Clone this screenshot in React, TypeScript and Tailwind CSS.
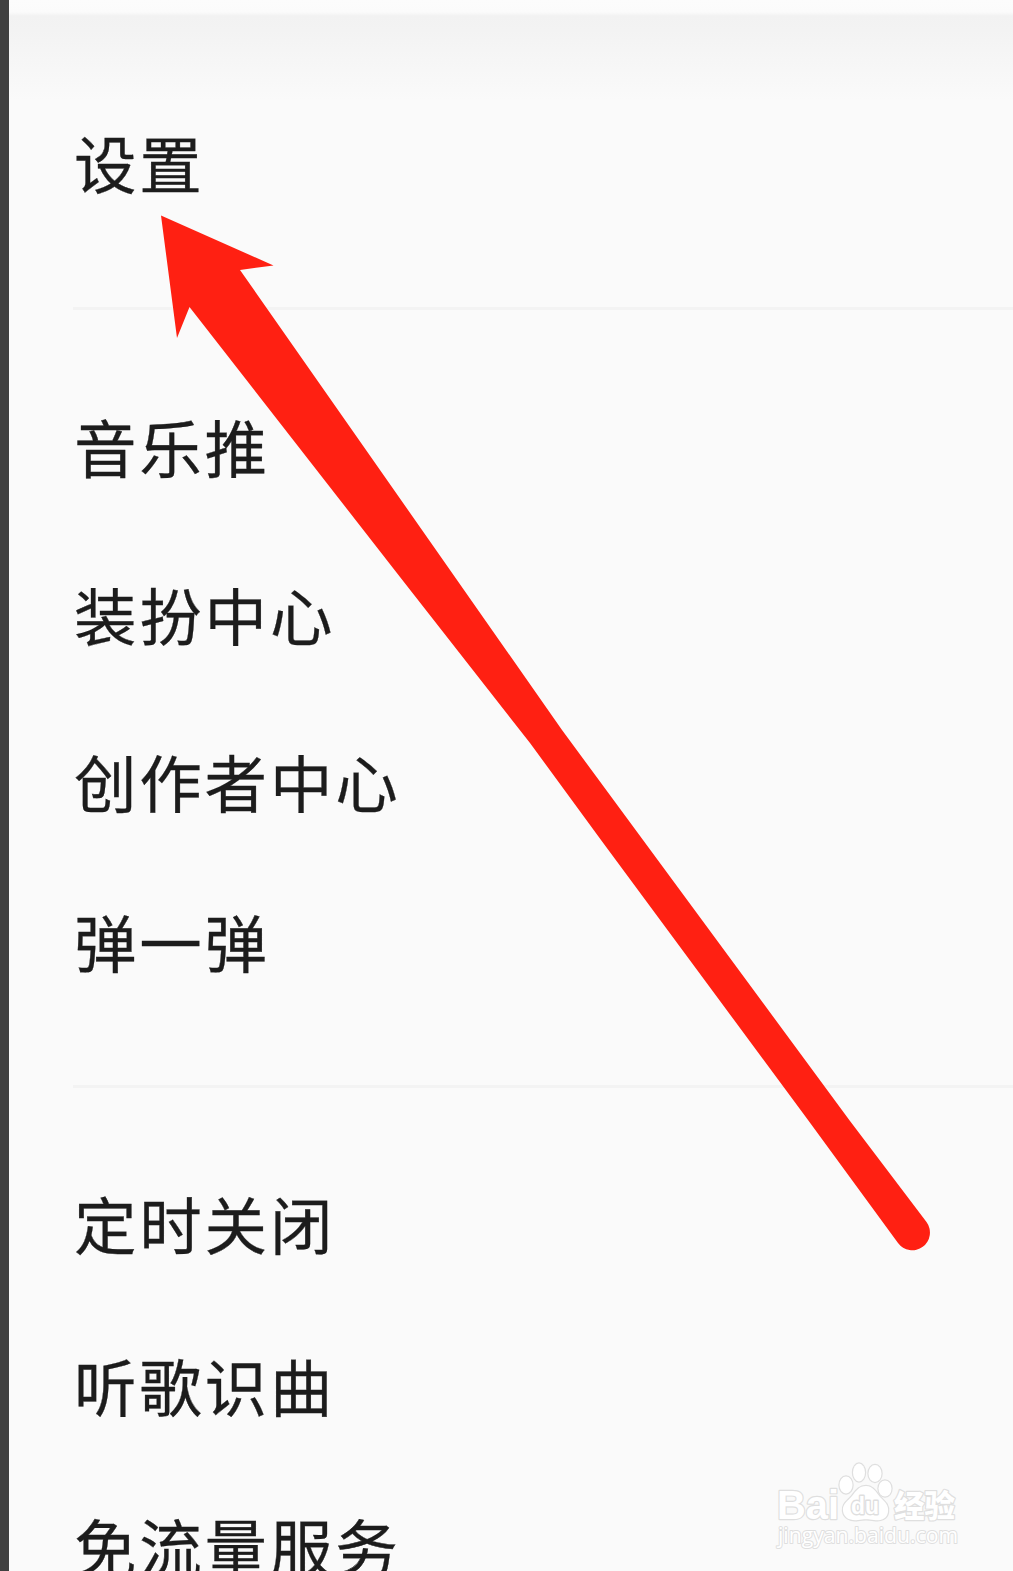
const groups = [
  {
    className: "pt-[68px] pb-[63px]",
    items: [{ label: "设置", height: "h-[163px]" }],
  },
  {
    className: "pt-[51px] pb-[66px]",
    items: [
      { label: "音乐推", height: "h-[170px]" },
      { label: "装扮中心", height: "h-[167px]" },
      { label: "创作者中心", height: "h-[166px]" },
      { label: "弹一弹", height: "h-[155px]" },
    ],
  },
  {
    className: "pt-[54px]",
    items: [
      { label: "定时关闭", height: "h-[162px]" },
      { label: "听歌识曲", height: "h-[162px]" },
      { label: "免流量服务", height: "h-[158px]" },
    ],
  },
];

function Arrow() {
  return (
    <svg className="absolute left-0 top-0 h-[1571px] w-[1013px]" viewBox="0 0 1013 1571" fill="#ff2012" aria-hidden="true">
      <path d="M161 215.500 L273.500 265.500 L240 270 L429 540 L562 730 L643 840 L850 1121 L926.500 1222 A17.500 17.500 0 0 1 898 1243 L808 1120 L601 840 L530 743 L400 577 L189.500 307 L177 338 Z" />
    </svg>
  );
}

function Watermark() {
  return (
    <svg className="absolute left-[770px] top-[1456px] h-[96px] w-[200px]" viewBox="0 0 200 96" aria-hidden="true">
      <g fill="#fff" stroke="#dfdfdf" strokeWidth="2.400" paintOrder="stroke" strokeLinejoin="round">
        <text x="7" y="62.500" fontSize="40" fontWeight="700" fontFamily="Liberation Sans, sans-serif" textLength="62" lengthAdjust="spacingAndGlyphs">Bai</text>
        <ellipse cx="76" cy="29" rx="6.500" ry="8.500" />
        <ellipse cx="89" cy="16.500" rx="6" ry="9" />
        <ellipse cx="105" cy="17.500" rx="6.500" ry="8.500" />
        <ellipse cx="115" cy="32.500" rx="6.500" ry="8" />
        <path d="M96 30 C103 30 106 36 110 41 C115 46 119 49 118 56 C117 63 111 65 104 64 C98 63 94 63 88 64 C80 65 74 62 73 55 C72 48 78 45 82 40 C86 35 89 30 96 30 Z" />
        <text x="81" y="58" fontSize="23" strokeWidth="2.800" fontFamily="Liberation Sans, sans-serif" fontWeight="700" textLength="28" lengthAdjust="spacingAndGlyphs">du</text>
        <text x="124" y="60.500" fontSize="30.500" fontWeight="900" fontFamily="Noto Sans CJK SC, sans-serif">经验</text>
        <text x="8" y="86.500" fontSize="21" strokeWidth="2" fontFamily="Open Sans, sans-serif" textLength="180" lengthAdjust="spacingAndGlyphs">jingyan.baidu.com</text>
      </g>
    </svg>
  );
}

export default function App() {
  return (
    <div className="relative flex h-[1571px] w-[1013px] overflow-hidden bg-[#fafafa]">
      <div className="w-[9px] shrink-0 bg-[#404040]" />
      <main className="flex grow flex-col bg-[linear-gradient(to_bottom,#fcfcfc_0px,#fbfbfb_12px,#f2f2f2_16px,#f3f3f3_30px,#fafafa_100px)] pt-[13px]">
        {groups.map((group, i) => (
          <section key={group.items[0].label} className="shrink-0 pl-[64px]">
            {i > 0 && <div className="h-[3px] bg-[#f3f3f3]" />}
            <ul className={group.className}>
              {group.items.map((item) => (
                <li key={item.label} className={`flex items-center pl-px ${item.height}`}>
                  <span className="whitespace-nowrap font-['Noto_Sans_CJK_SC',sans-serif] text-[62.5px] leading-none tracking-[2.8px] text-[#1c1c1c] [-webkit-text-stroke:0.3px_#1c1c1c]">
                    {item.label}
                  </span>
                </li>
              ))}
            </ul>
          </section>
        ))}
      </main>
      <Arrow />
      <Watermark />
    </div>
  );
}
